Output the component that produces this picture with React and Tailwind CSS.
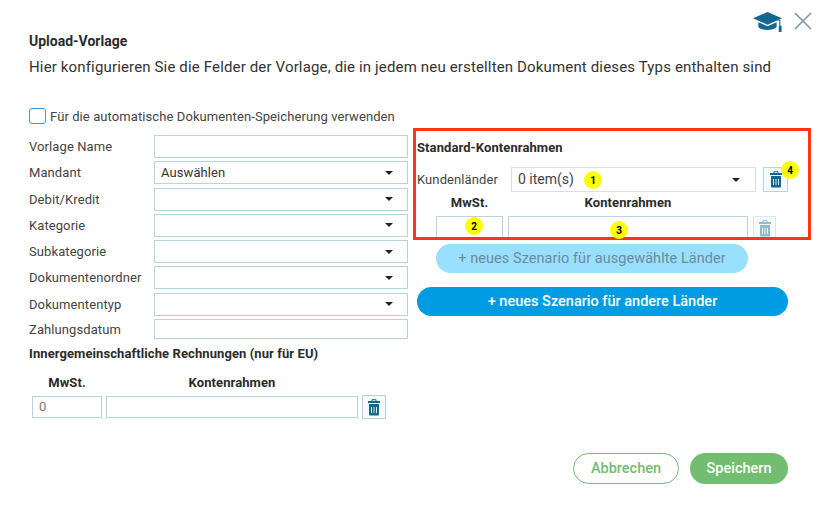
const border = "border border-[#b9d3de]";

function Caret() {
  return <span className="ml-auto w-0 h-0 border-x-[4px] border-x-transparent border-t-[4px] border-t-[#222]" />;
}

function Trash({ faded }) {
  const c = faded ? "#93bccb" : "#14688f";
  return (
    <svg width="12" height="17" viewBox="0 0 12 17">
      <path d="M4 2V0.7H8V2" fill="none" stroke={c} strokeWidth="1" />
      <rect x="0" y="2" width="12" height="2" fill={c} />
      <path d="M1 5H11V15.5a1 1 0 0 1-1 1H2a1 1 0 0 1-1-1Z" fill={c} />
      <path d="M3.5 8V14M6 8V14M8.5 8V14" stroke="#fff" strokeWidth="1" opacity="0.85" />
    </svg>
  );
}

function TrashButton({ faded, cls }) {
  return (
    <div className={`flex items-center justify-center border ${faded ? "border-[#dbe8ed]" : "border-[#b9d3de]"} bg-[#f7fafb] ${cls}`}>
      <Trash faded={faded} />
    </div>
  );
}

function Badge({ n, cls }) {
  return (
    <span className={`absolute flex items-center justify-center w-[18px] h-[18px] rounded-full bg-[#ffff00] text-[10px] font-bold text-black ${cls}`}>
      {n}
    </span>
  );
}

function Row({ label, select, value, h = "h-[23px]", cls = "" }) {
  return (
    <div className={`flex items-center ${cls}`}>
      <span className="w-[125px] text-[13px] tracking-[0.09px] text-[#444] leading-none">{label}</span>
      <div className={`w-[254px] ${h} ${border} flex items-center pl-[6px] pr-[14px] text-[13px] tracking-[0.09px] text-[#333]`}>
        {value}
        {select && <Caret />}
      </div>
    </div>
  );
}

export default function App() {
  return (
    <div className="relative w-[820px] h-[516px] bg-white overflow-hidden font-['Roboto',sans-serif] text-[#333]">
      <div className="flex justify-end items-start gap-[12px] pt-[12px] pr-[8px] h-[32px]">
        <svg width="29" height="20" viewBox="1 1 27 20.5" preserveAspectRatio="none">
          <path d="M14.5 1L28 7.5L14.5 14L1 7.5Z" fill="#14688f" />
          <path d="M6 11.5V16.5C9 20.5 20 20.5 23 16.5V11.5L14.5 15.5Z" fill="#14688f" />
          <path d="M14.5 7.5L26 9.5V15" fill="none" stroke="#14688f" strokeWidth="1" />
          <rect x="25" y="15" width="2.6" height="6.5" fill="#14688f" />
        </svg>
        <svg width="18" height="18" viewBox="0 0 18 18">
          <path d="M1 1L17 17M17 1L1 17" stroke="#7f93ad" strokeWidth="1.6" />
        </svg>
      </div>

      <div className="pl-[29px]">
        <h1 className="text-[14px] leading-[18px] font-bold text-[#2b2b2b]">Upload-Vorlage</h1>
        <p className="mt-[8px] text-[15px] leading-[18px] tracking-[0.15px] text-[#333]">
          Hier konfigurieren Sie die Felder der Vorlage, die in jedem neu erstellten Dokument dieses Typs enthalten sind
        </p>

        <div className="flex mt-[31px]">
          <div className="w-[388px]">
            <div className="flex items-center h-[17px] mb-[11px]">
              <span className="w-[17px] h-[16px] rounded-[3px] border border-[#2f9fe0]" />
              <span className="ml-[4px] mt-[3px] text-[13px] tracking-[0.09px] text-[#444]">Für die automatische Dokumenten-Speicherung verwenden</span>
            </div>
            <div className="flex flex-col gap-[3.3px]">
              <Row label="Vorlage Name" />
              <Row label="Mandant" select value="Auswählen" />
              <Row label="Debit/Kredit" select />
              <Row label="Kategorie" select />
              <Row label="Subkategorie" select />
              <Row label="Dokumentenordner" select />
              <Row label="Dokumententyp" select />
              <Row label="Zahlungsdatum" h="h-[20px]" />
            </div>
            <h2 className="mt-[8px] text-[13px] tracking-[0.09px] leading-[14px] font-bold text-[#2b2b2b]">
              Innergemeinschaftliche Rechnungen (nur für EU)
            </h2>
            <div className="flex mt-[15px] text-[13px] tracking-[0.09px] leading-[14px] font-bold text-[#2b2b2b]">
              <span className="ml-[3px] w-[70px] text-center">MwSt.</span>
              <span className="ml-[4px] w-[252px] text-center">Kontenrahmen</span>
            </div>
            <div className="flex items-center mt-[5px] ml-[3px] gap-[4px]">
              <div className={`w-[70px] h-[22px] ${border} flex items-center pl-[6px] text-[13px] text-[#777]`}>0</div>
              <div className={`w-[252px] h-[22px] ${border}`} />
              <TrashButton cls="w-[24px] h-[24px]" />
            </div>
          </div>

          <div className="w-[371px] mt-[33px]">
            <h2 className="text-[13px] tracking-[0.09px] leading-[16px] font-bold text-[#2b2b2b]">Standard-Kontenrahmen</h2>
            <div className="flex items-center mt-[11px]">
              <span className="w-[94px] text-[13px] tracking-[0.09px] text-[#444]">Kundenländer</span>
              <div className="w-[245px] h-[25px] border border-[#d9dfe2] flex items-center pl-[6px] pr-[15px] text-[14px] text-[#444]">
                0 item(s)
                <Caret />
              </div>
              <TrashButton cls="ml-[7px] w-[25px] h-[25px]" />
            </div>
            <div className="flex mt-[4px] text-[13px] tracking-[0.09px] leading-[14px] font-bold text-[#2b2b2b]">
              <span className="ml-[19px] w-[67px] text-center">MwSt.</span>
              <span className="ml-[5px] w-[240px] text-center">Kontenrahmen</span>
            </div>
            <div className="flex items-center mt-[6px] ml-[19px]">
              <div className={`w-[67px] h-[24px] ${border}`} />
              <div className={`ml-[5px] w-[240px] h-[24px] ${border}`} />
              <TrashButton faded cls="ml-[5px] w-[23px] h-[24px]" />
            </div>
            <div className="ml-[19px] mt-[4px] w-[312px] h-[29px] rounded-full bg-[#99e0ff] flex items-center justify-center text-[14.5px] tracking-[0.05px] text-[#6f8a9c]">
              + neues Szenario für ausgewählte Länder
            </div>
            <div className="mt-[14px] w-[371px] h-[29px] rounded-full bg-[#009ce3] flex items-center justify-center text-[14.5px] font-medium text-white">
              + neues Szenario für andere Länder
            </div>
          </div>
        </div>
      </div>

      <div className="flex justify-end gap-[11px] pr-[32px] mt-[34px]">
        <div className="w-[106px] h-[31px] rounded-full border border-[#72bd6f] flex items-center justify-center text-[14.5px] font-medium text-[#72bd6f]">Abbrechen</div>
        <div className="w-[98px] h-[31px] rounded-full bg-[#72bd6f] flex items-center justify-center text-[14.5px] font-medium text-white">Speichern</div>
      </div>

      <div className="absolute left-[413px] top-[128px] w-[398px] h-[112px] border-[3px] border-[#ff3413]" />
      <Badge n="1" cls="left-[584px] top-[171px]" />
      <Badge n="2" cls="left-[465px] top-[217px]" />
      <Badge n="3" cls="left-[610px] top-[221px]" />
      <Badge n="4" cls="left-[781px] top-[161px]" />
    </div>
  );
}
